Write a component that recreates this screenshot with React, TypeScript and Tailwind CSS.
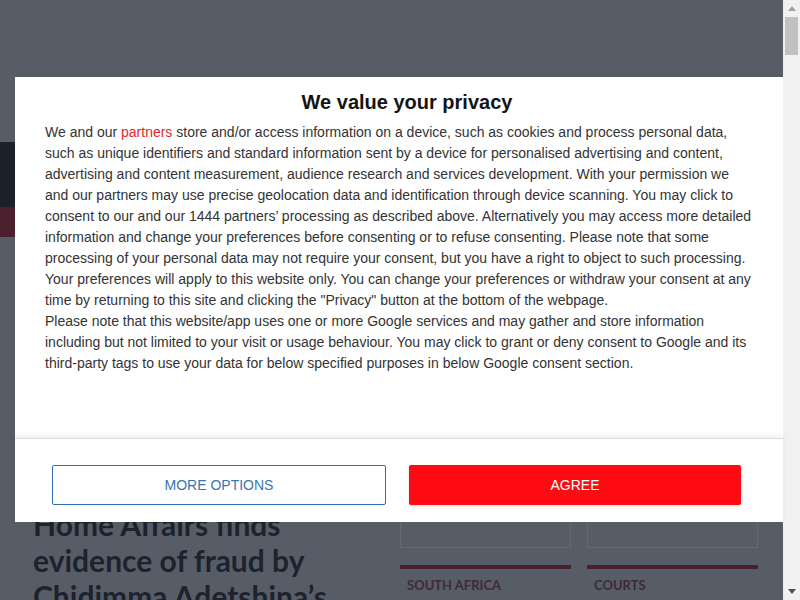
const body =
  "store and/or access information on a device, such as cookies and process personal data, such as unique identifiers and standard information sent by a device for personalised advertising and content, advertising and content measurement, audience research and services development. With your permission we and our partners may use precise geolocation data and identification through device scanning. You may click to consent to our and our 1444 partners’ processing as described above. Alternatively you may access more detailed information and change your preferences before consenting or to refuse consenting. Please note that some processing of your personal data may not require your consent, but you have a right to object to such processing. Your preferences will apply to this website only. You can change your preferences or withdraw your consent at any time by returning to this site and clicking the \"Privacy\" button at the bottom of the webpage.";

const google =
  "Please note that this website/app uses one or more Google services and may gather and store information including but not limited to your visit or usage behaviour. You may click to grant or deny consent to Google and its third-party tags to use your data for below specified purposes in below Google consent section.";

function Scrollbar() {
  return (
    <div className="w-[17px] h-full shrink-0 bg-[#f1f1f1] flex flex-col items-center">
      <div className="h-[17px] flex items-center justify-center">
        <svg width="8" height="5" viewBox="0 0 8 5">
          <path d="M0 5 L4 0 L8 5 Z" fill="#a3a3a3" />
        </svg>
      </div>
      <div className="w-[13px] h-[38px] bg-[#c1c1c1]" />
      <div className="flex-1" />
      <div className="h-[17px] flex items-center justify-center">
        <svg width="8" height="5" viewBox="0 0 8 5">
          <path d="M0 0 L8 0 L4 5 Z" fill="#505050" />
        </svg>
      </div>
    </div>
  );
}

function PageBehind() {
  return (
    <div className="flex-1 h-full bg-[#575d67] flex flex-col overflow-hidden">
      <div className="h-[142px] shrink-0" />
      <div className="h-[65px] shrink-0 bg-[#1c2029]" />
      <div className="h-[30px] shrink-0 bg-[#4b1f2e]" />
      <div className="h-[271px] shrink-0" />
      <div className="flex shrink-0 pl-[33px]">
        <h1
          className="w-[367px] shrink-0 -mt-[2px] text-[30px] leading-[36px] font-bold text-[#1d222c]"
          style={{ fontFamily: "Lato, 'Open Sans', sans-serif" }}
        >
          Home Affairs finds evidence of fraud by Chidimma Adetshina’s mother
        </h1>
        <div className="flex gap-[16px]" style={{ fontFamily: "Lato, sans-serif" }}>
          {["SOUTH AFRICA", "COURTS"].map((t) => (
            <div key={t} className="w-[171px] flex flex-col">
              <div className="h-[40px] border border-t-0 border-[#646973]" />
              <div className="h-[4px] bg-[#4b1f2e] mt-[17px]" />
              <div className="text-[13px] leading-[16px] font-bold text-[#3e2a36] pl-[7px] pt-[8px]">{t}</div>
            </div>
          ))}
        </div>
      </div>
    </div>
  );
}

export default function App() {
  return (
    <div
      className="relative w-full h-[600px] overflow-hidden flex"
      style={{ fontFamily: "'Liberation Sans', Arial, sans-serif" }}
    >
      <PageBehind />
      <Scrollbar />

      {/* consent dialog */}
      <div className="absolute left-[15px] top-[77px] w-[768px] h-[445px] bg-white flex flex-col">
        <div className="flex-1 px-[30px] pt-[13px]">
          <h2 className="text-center text-[20px] leading-[24px] font-bold text-[#141414] pl-[16px]">
            We value your privacy
          </h2>
          <div className="mt-[8px] w-[710px] text-[14px] leading-[21px] text-[#333]">
            <p>
              We and our <span className="text-[#e3262f]">partners</span> {body}
            </p>
            <p>{google}</p>
          </div>
        </div>
        <div className="h-[84px] shrink-0 border-t border-[#dcdcdc] shadow-[0_-3px_5px_rgba(0,0,0,0.06)] flex items-start pt-[26px] pl-[37px] gap-[23px]">
          <button className="w-[334px] h-[40px] rounded-[2px] border border-[#2f6cb0] text-[#3b74b5] text-[14px]">
            MORE OPTIONS
          </button>
          <button className="w-[332px] h-[40px] rounded-[2px] bg-[#ff0a12] text-white text-[14px] shadow-[0_1px_3px_rgba(0,0,0,0.15)]">
            AGREE
          </button>
        </div>
      </div>
    </div>
  );
}
